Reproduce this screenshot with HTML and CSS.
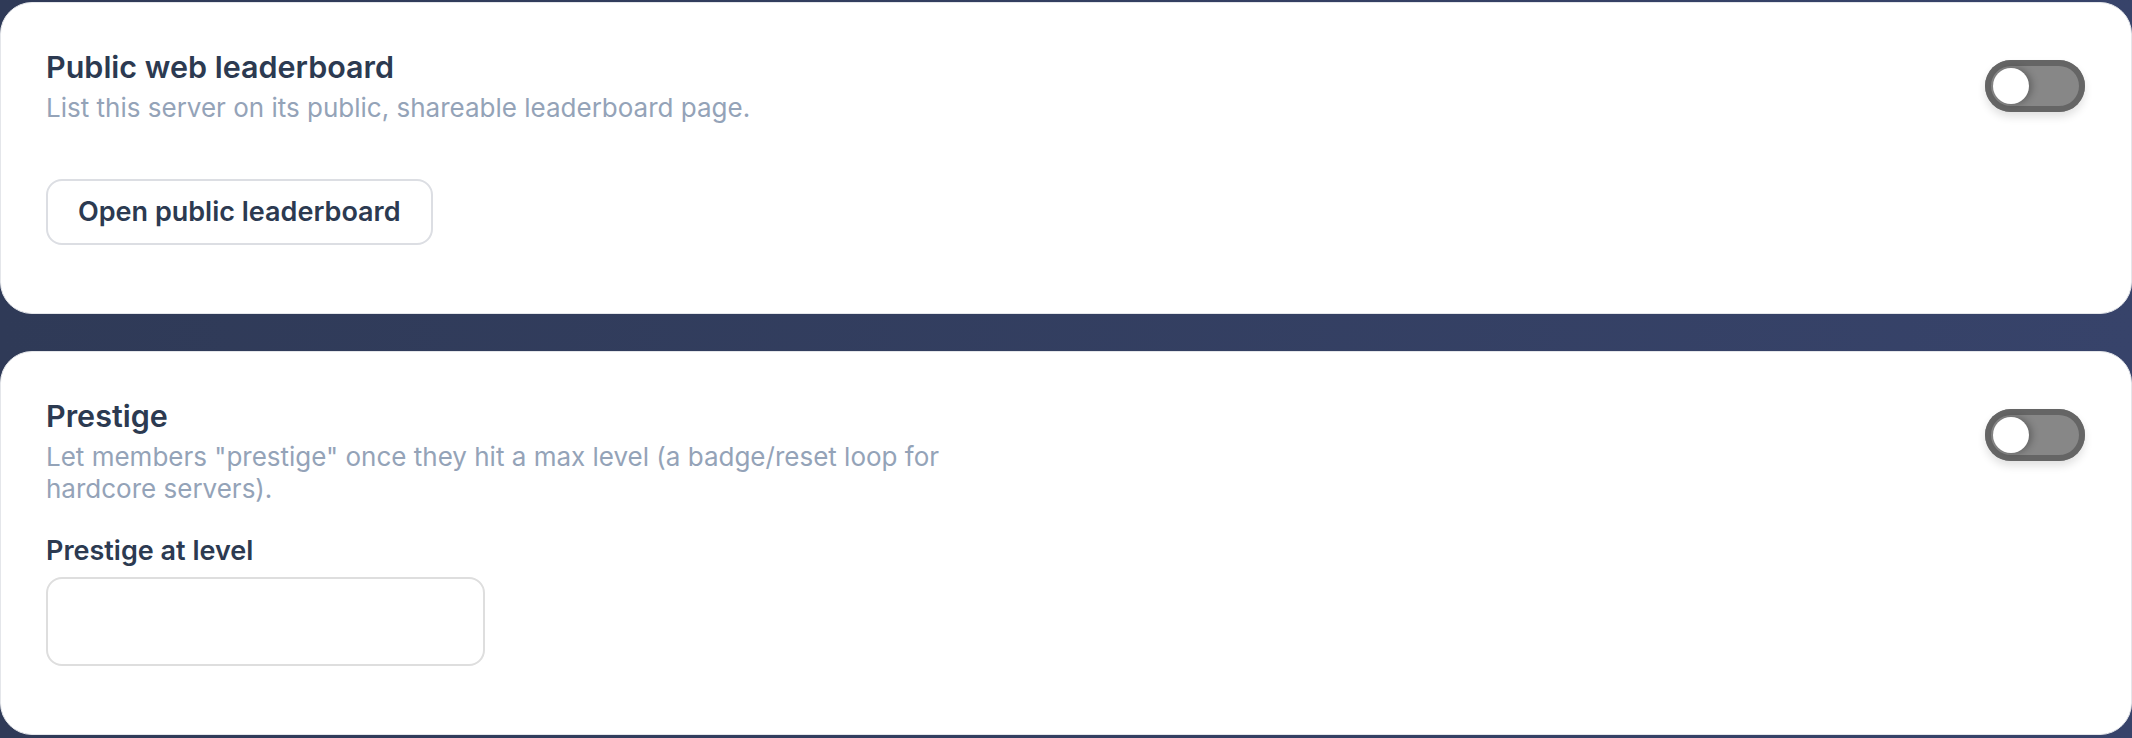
FILE: index.html
```html
<!DOCTYPE html>
<html lang="en">
<head>
  <meta charset="UTF-8">
  <meta name="viewport" content="width=device-width, initial-scale=1.0">
  <title>Leaderboard Settings</title>
  <link rel="stylesheet" href="styles.css">
</head>
<body>

  <div class="settings">

    <!-- Public leaderboard -->
    <section class="card">
      <div class="card-head">
        <div class="card-text">
          <h3 class="card-title">Public web leaderboard</h3>
          <p class="card-desc">List this server on its public, shareable leaderboard page.</p>
        </div>
        <button class="switch" type="button" aria-pressed="false"><span class="knob"></span></button>
      </div>
      <button class="btn-outline" type="button">Open public leaderboard</button>
    </section>

    <!-- Prestige -->
    <section class="card">
      <div class="card-head">
        <div class="card-text">
          <h3 class="card-title">Prestige</h3>
          <p class="card-desc">Let members "prestige" once they hit a max level (a badge/reset loop for hardcore servers).</p>
        </div>
        <button class="switch" type="button" aria-pressed="false"><span class="knob"></span></button>
      </div>
      <label class="field-label" for="prestige-level">Prestige at level</label>
      <input class="field-input" type="text" id="prestige-level">
    </section>

  </div>

</body>
</html>
```

FILE: styles.css
```css
/* General Styles */
body, html {
  margin: 0;
  padding: 0;
  font-family: 'Inter', 'Noto Sans', sans-serif;
  background: linear-gradient(to right, #2f3a57, #37436a);
  color: #2d3a4f;
  height: 100%;
  overflow: hidden;
}

.settings {
  padding-top: 2px;
  display: flex;
  flex-direction: column;
  gap: 37px;
}

/* Cards */
.card {
  background: #fff;
  border: 1px solid #e4e6ea;
  border-radius: 32px;
  padding: 45px 46px 68px 45px;
}

.card-head {
  display: flex;
  justify-content: space-between;
  align-items: flex-start;
}

.card-text {
  max-width: 960px;
}

.card-title {
  margin: 0;
  font-size: 30.5px;
  line-height: 38px;
  font-weight: 600;
  color: #2c3a51;
}

.card-desc {
  margin: 5.5px 0 0;
  font-size: 26px;
  line-height: 32px;
  color: #94a3b8;
}

/* Toggle switch (off state) */
.switch {
  flex: none;
  margin-top: 12px;
  width: 100px;
  height: 52px;
  padding: 0 8px;
  border: none;
  border-radius: 26px;
  background: #878787;
  box-shadow: inset 0 0 0 6px #656565, 0 5px 9px rgba(0, 0, 0, 0.12);
  display: flex;
  align-items: center;
  cursor: pointer;
}

.knob {
  width: 36px;
  height: 36px;
  border-radius: 50%;
  background: #fff;
  box-shadow: 3px 0 7px rgba(0, 0, 0, 0.28);
}

/* Button */
.btn-outline {
  margin-top: 55.5px;
  padding: 16px 30px;
  font-family: inherit;
  font-size: 27px;
  line-height: 30px;
  font-weight: 600;
  color: #2c3a51;
  background: #fff;
  border: 2px solid #dcdee3;
  border-radius: 16px;
  cursor: pointer;
}

/* Form field */
.field-label {
  display: block;
  margin-top: 30.5px;
  font-size: 27px;
  line-height: 32px;
  font-weight: 600;
  color: #2c3a51;
}

.field-input {
  display: block;
  margin-top: 10px;
  width: 439px;
  height: 89px;
  box-sizing: border-box;
  border: 2px solid #dedede;
  border-radius: 16px;
  font-family: inherit;
  font-size: 26px;
  padding: 0 20px;
  outline: none;
}
```
